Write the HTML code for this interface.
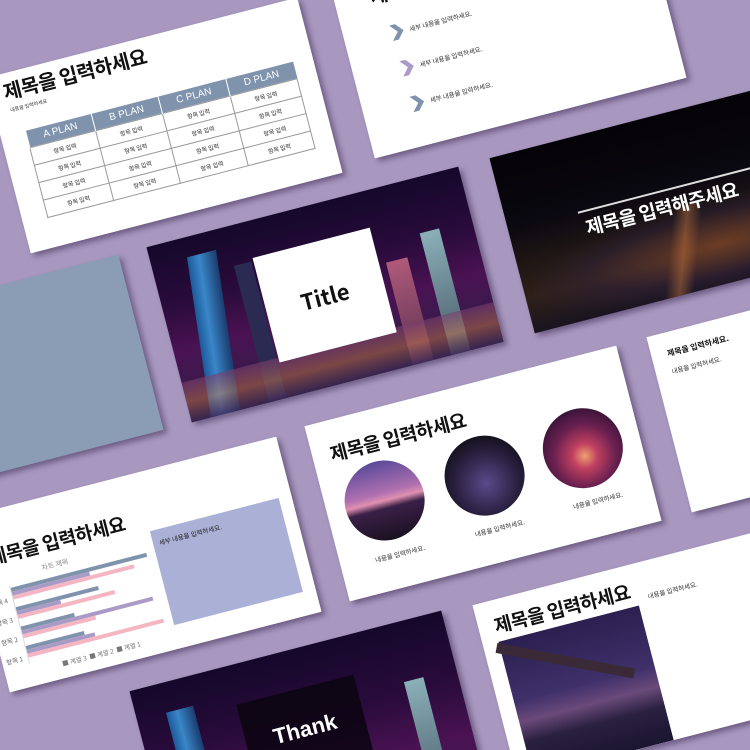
<!DOCTYPE html>
<html><head><meta charset="utf-8"><style>
*{margin:0;padding:0;box-sizing:border-box}
html,body{width:750px;height:750px;overflow:hidden;background:#a898c0}
body{position:relative;font-family:"Liberation Sans","Noto Sans CJK KR",sans-serif}
#w{position:absolute;left:0;top:0;width:750px;height:750px;overflow:hidden}
.s{position:absolute;width:322px;height:181px;transform:rotate(-14.5deg);background:#fff;box-shadow:3px 4px 6px rgba(40,20,60,.45);overflow:hidden}
.a{position:absolute}
.t{position:absolute;font-weight:700;font-size:19px;color:#111;white-space:nowrap;font-family:"Noto Sans CJK KR",sans-serif;letter-spacing:-0.5px}
.sm{position:absolute;font-size:6.5px;color:#333;white-space:nowrap;font-family:"Noto Sans CJK KR",sans-serif}
table{border-collapse:collapse}
td{border:1px solid #999;font-size:6px;text-align:center;color:#333;font-family:"Noto Sans CJK KR",sans-serif;height:18px}
th{background:#7f93ad;color:#fff;font-size:10px;font-weight:400;height:17px;border-left:1px solid #fff}
.chev{position:absolute;width:14px;height:16px}
</style></head><body><div id="w">

<div class="s" style="left:3px;top:35px">
 <div class="t" style="left:14px;top:3px;font-size:20px">제목을 입력하세요</div>
 <div class="sm" style="left:16px;top:34px;font-size:5px">내용을 입력하세요</div>
 <table class="a" style="left:25px;top:61px;width:277px">
  <tr><th>A PLAN</th><th>B PLAN</th><th>C PLAN</th><th>D PLAN</th></tr>
  <tr><td>항목 입력</td><td>항목 입력</td><td>항목 입력</td><td>항목 입력</td></tr>
  <tr><td>항목 입력</td><td>항목 입력</td><td>항목 입력</td><td>항목 입력</td></tr>
  <tr><td>항목 입력</td><td>항목 입력</td><td>항목 입력</td><td>항목 입력</td></tr>
  <tr><td>항목 입력</td><td>항목 입력</td><td>항목 입력</td><td>항목 입력</td></tr>
 </table>
</div>

<div class="s" style="left:347px;top:-60px">
 <div class="t" style="left:36px;top:10px">제목을 입력하세요</div>
 <svg class="chev" style="left:47px;top:56px" viewBox="0 0 14 16"><path d="M0 0H6L13 8L6 16H0L7 8Z" fill="#7f93ad"/></svg>
 <div class="sm" style="left:66px;top:59px">세부 내용을 입력하세요.</div>
 <svg class="chev" style="left:48px;top:93px" viewBox="0 0 14 16"><path d="M0 0H6L13 8L6 16H0L7 8Z" fill="#a99bc6"/></svg>
 <div class="sm" style="left:67px;top:96px">세부 내용을 입력하세요.</div>
 <svg class="chev" style="left:49px;top:130px" viewBox="0 0 14 16"><path d="M0 0H6L13 8L6 16H0L7 8Z" fill="#7f93ad"/></svg>
 <div class="sm" style="left:68px;top:133px">세부 내용을 입력하세요.</div>
</div>

<div class="s" style="left:507px;top:115px;background:linear-gradient(180deg,#050307 0%,#0a0810 40%,#1e1614 60%,#2e2018 80%,#1a1420 100%)">
 <div class="a" style="left:10px;top:95px;width:320px;height:90px;background:radial-gradient(ellipse at 60% 50%,rgba(170,90,50,.5),rgba(60,40,80,.3) 50%,transparent 75%)"></div>
 <div class="a" style="left:150px;top:95px;width:30px;height:86px;background:linear-gradient(90deg,transparent,rgba(200,120,60,.45),transparent);transform:skewX(-20deg)"></div>
 <div class="a" style="left:72px;top:74px;width:250px;height:1.5px;background:#ddd"></div>
 <div class="t" style="left:76px;top:78px;color:#fff;font-size:19px">제목을 입력해주세요</div>
</div>

<div class="s" style="left:164px;top:204px;background:linear-gradient(180deg,#14082a 0%,#2a0b3c 35%,#4a1252 60%,#3a1a4c 80%,#201028 100%)">
 <div class="a" style="left:28px;top:20px;width:30px;height:165px;background:linear-gradient(90deg,#1c5a9a,#3a86c8 40%,#1a3c6e);transform:skewX(-6deg)"></div>
 <div class="a" style="left:80px;top:40px;width:18px;height:140px;background:#2a2a52"></div>
 <div class="a" style="left:228px;top:75px;width:22px;height:106px;background:linear-gradient(180deg,#b05a7a,#5a3050)"></div>
 <div class="a" style="left:268px;top:55px;width:20px;height:126px;background:linear-gradient(180deg,#8ab0b8,#4a5a6a)"></div>
 <div class="a" style="left:0;top:140px;width:322px;height:41px;background:linear-gradient(180deg,rgba(120,60,110,.6),rgba(200,120,80,.5) 50%,rgba(60,40,90,.8))"></div>
 <div class="a" style="left:100px;top:37px;width:121px;height:108px;background:#fff"></div>
 <div class="a" style="left:100px;top:76px;width:121px;text-align:center;font-size:22px;font-weight:700;color:#111;font-family:'Noto Sans CJK KR',sans-serif">Title</div>
</div>

<div class="s" style="left:-176px;top:292px;background:#8a9db5"></div>

<div class="s" style="left:-18px;top:474px">
 <div class="t" style="left:14px;top:32px">제목을 입력하세요</div>
 <div class="sm" style="left:62px;top:64px;color:#888;font-size:7px">차트 제목</div>
 <div class="a" style="left:26px;top:78px;width:145px;height:80px;border-left:1px solid #ddd">
  <div class="a" style="left:0;top:2px;width:140px;height:4px;background:#7f93ad"></div>
  <div class="a" style="left:0;top:6px;width:80px;height:4px;background:#a99bc6"></div>
  <div class="a" style="left:0;top:10px;width:125px;height:4px;background:#f4b6c2"></div>
  <div class="a" style="left:0;top:22px;width:85px;height:4px;background:#7f93ad"></div>
  <div class="a" style="left:0;top:26px;width:45px;height:4px;background:#a99bc6"></div>
  <div class="a" style="left:0;top:30px;width:100px;height:4px;background:#f4b6c2"></div>
  <div class="a" style="left:0;top:42px;width:55px;height:4px;background:#7f93ad"></div>
  <div class="a" style="left:0;top:46px;width:135px;height:4px;background:#a99bc6"></div>
  <div class="a" style="left:0;top:50px;width:75px;height:4px;background:#f4b6c2"></div>
  <div class="a" style="left:0;top:62px;width:60px;height:4px;background:#7f93ad"></div>
  <div class="a" style="left:0;top:66px;width:70px;height:4px;background:#a99bc6"></div>
  <div class="a" style="left:0;top:70px;width:140px;height:4px;background:#f4b6c2"></div>
 </div>
 <div class="sm" style="left:4px;top:86px;color:#666">항목 4</div>
 <div class="sm" style="left:4px;top:106px;color:#666">항목 3</div>
 <div class="sm" style="left:4px;top:126px;color:#666">항목 2</div>
 <div class="sm" style="left:4px;top:146px;color:#666">항목 1</div>
 <div class="sm" style="left:58px;top:161px;color:#777">■ 계열 3 &nbsp;■ 계열 2 &nbsp;■ 계열 1</div>
 <div class="a" style="left:176px;top:60px;width:133px;height:97px;background:#abb1d6"></div>
 <div class="sm" style="left:182px;top:68px;color:#222">세부 내용을 입력하세요.</div>
</div>

<div class="s" style="left:322px;top:383px">
 <div class="t" style="left:18px;top:20px">제목을 입력하세요</div>
 <div class="a" style="left:19px;top:52px;width:80px;height:80px;border-radius:50%;background:linear-gradient(180deg,#5a4a9a 0%,#b070b0 40%,#e090b0 50%,#3a2048 60%,#1a1020 100%)"></div>
 <div class="a" style="left:122px;top:53px;width:80px;height:80px;border-radius:50%;background:radial-gradient(circle at 50% 60%,#5a4a8a,#2a2040 50%,#101018 80%)"></div>
 <div class="a" style="left:224px;top:51px;width:80px;height:80px;border-radius:50%;background:radial-gradient(circle at 50% 60%,#f0a070 0%,#c04060 20%,#6a2050 50%,#2a1030 85%)"></div>
 <div class="sm" style="left:35px;top:142px">내용을 입력하세요.</div>
 <div class="sm" style="left:138px;top:142px">내용을 입력하세요.</div>
 <div class="sm" style="left:240px;top:140px">내용을 입력하세요.</div>
</div>

<div class="s" style="left:664px;top:294px">
 <div class="sm" style="left:16px;top:16px;font-weight:700;font-size:8px;color:#111">제목을 입력하세요.</div>
 <div class="sm" style="left:16px;top:34px">내용을 입력하세요.</div>
</div>

<div class="s" style="left:490px;top:562px">
 <div class="t" style="left:16px;top:12px">제목을 입력하세요</div>
 <div class="a" style="left:16px;top:42px;width:145px;height:139px;background:linear-gradient(180deg,#2a2050 0%,#40306a 45%,#6a4a7a 60%,#2a2040 75%,#1a1530 100%)">
  <div class="a" style="left:-10px;top:30px;width:140px;height:10px;background:#3a2a38;transform:rotate(25deg)"></div>
 </div>
 <div class="sm" style="left:172px;top:30px">내용을 입력하세요.</div>
</div>

<div class="s" style="left:147px;top:648px;background:linear-gradient(180deg,#14082a 0%,#2a0b3c 40%,#4a1252 70%,#3a1a4c 100%)">
 <div class="a" style="left:30px;top:30px;width:28px;height:160px;background:linear-gradient(90deg,#1c5a9a,#3a86c8 40%,#1a3c6e)"></div>
 <div class="a" style="left:100px;top:40px;width:121px;height:108px;background:rgba(10,5,15,.85)"></div>
 <div class="a" style="left:100px;top:68px;width:121px;text-align:center;font-size:22px;font-weight:700;color:#fff">Thank</div>
 <div class="a" style="left:268px;top:60px;width:20px;height:126px;background:linear-gradient(180deg,#8ab0b8,#4a5a6a)"></div>
</div>
</div></body></html>
